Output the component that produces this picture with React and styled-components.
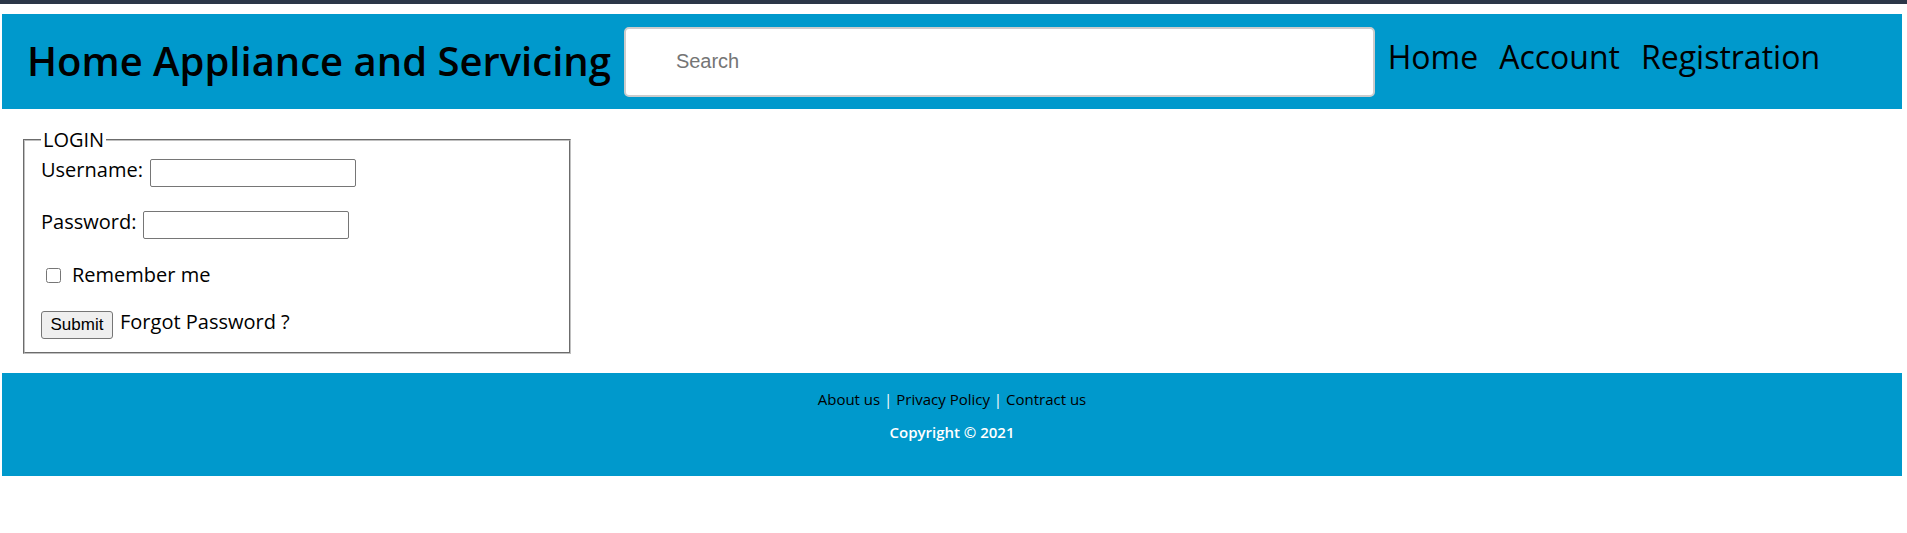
import React from "react";
import styled, { createGlobalStyle } from "styled-components";

const GlobalStyle = createGlobalStyle`
  * { box-sizing: border-box; }
  body {
    margin: 0;
    background: #fff;
    color: #000;
    font-family: "Open Sans", "Noto Sans", sans-serif;
    font-size: 20px;
    line-height: 28px;
  }
`;

const Page = styled.div`
  border-top: 4px solid #2b3648;
  padding: 10px 5px 0 2px;
`;

const Header = styled.header`
  display: flex;
  align-items: center;
  gap: 13px;
  padding: 13px 82px 12px 25px;
  background: #0099cc;
`;

const Title = styled.h1`
  margin: 0;
  padding-bottom: 2px;
  font-size: 40px;
  font-weight: 600;
  line-height: 48px;
  white-space: nowrap;
`;

const Search = styled.input`
  flex: 1;
  min-width: 0;
  height: 70px;
  padding: 12px 20px 14px 50px;
  border: 2px solid #ccc;
  border-radius: 5px;
  background: #fff;
  font-family: "Liberation Sans", Arial, sans-serif;
  font-size: 20px;
  &::placeholder { color: #757575; }
`;

const Nav = styled.nav`
  display: flex;
  gap: 21px;
  padding-bottom: 10px;
  font-size: 32px;
  line-height: 40px;
`;

const PlainLink = styled.a`
  color: #000;
  text-decoration: none;
  white-space: nowrap;
`;

const Login = styled.fieldset`
  width: 548px;
  max-width: 100%;
  margin: 17px 21px 19px;
  padding: 5px 16px 13px;
  border: 2px groove #c0c0c0;
`;

const Legend = styled.legend`
  padding: 0 2px;
`;

const Row = styled.div`
  display: flex;
  align-items: ${(p) => (p.$raised ? "flex-end" : "center")};
  gap: 7px;
  height: 28px;
  margin-bottom: ${(p) => p.$space || 0}px;

  & > label,
  & > a {
    padding-bottom: ${(p) => (p.$raised ? 3 : 0)}px;
  }
`;

const TextField = styled.input`
  width: 206px;
  height: 28px;
  padding: 1px 3px;
  border: 1px solid #767676;
  border-radius: 2px;
  background: #fff;
  font-family: "Liberation Sans", Arial, sans-serif;
  font-size: 17px;
`;

const Check = styled.input`
  width: 15px;
  height: 15px;
  margin: 0 4px 0 5px;
`;

const Submit = styled.button`
  width: 72px;
  height: 28px;
  padding: 0;
  border: 1px solid #767676;
  border-radius: 3px;
  background: #efefef;
  color: #000;
  font-family: "Liberation Sans", Arial, sans-serif;
  font-size: 17px;
`;

const Footer = styled.footer`
  padding: 15px 0 33px;
  background: #0099cc;
  color: #fff;
  font-size: 15px;
  line-height: 22px;
  text-align: center;
`;

const FooterLine = styled.p`
  margin: 0 0 11px;
`;

const Copyright = styled.p`
  margin: 0;
  font-weight: 600;
`;

export default function App() {
  return (
    <>
      <GlobalStyle />
      <Page>
        <Header>
          <Title>Home Appliance and Servicing</Title>
          <Search type="text" placeholder="Search" aria-label="Search" />
          <Nav>
            <PlainLink href="#home">Home</PlainLink>
            <PlainLink href="#account">Account</PlainLink>
            <PlainLink href="#registration">Registration</PlainLink>
          </Nav>
        </Header>
        <form onSubmit={(e) => e.preventDefault()}>
          <Login>
            <Legend>LOGIN</Legend>
            <Row $raised $space={24}>
              <label htmlFor="username">Username:</label>
              <TextField id="username" type="text" />
            </Row>
            <Row $raised $space={22}>
              <label htmlFor="password">Password:</label>
              <TextField id="password" type="password" />
            </Row>
            <Row $space={22}>
              <Check id="remember" type="checkbox" />
              <label htmlFor="remember">Remember me</label>
            </Row>
            <Row $raised>
              <Submit type="submit">Submit</Submit>
              <PlainLink href="#forgot">Forgot Password ?</PlainLink>
            </Row>
          </Login>
        </form>
        <Footer>
          <FooterLine>
            <PlainLink href="#about">About us</PlainLink> |{" "}
            <PlainLink href="#privacy">Privacy Policy</PlainLink> |{" "}
            <PlainLink href="#contact">Contract us</PlainLink>
          </FooterLine>
          <Copyright>Copyright © 2021</Copyright>
        </Footer>
      </Page>
    </>
  );
}
